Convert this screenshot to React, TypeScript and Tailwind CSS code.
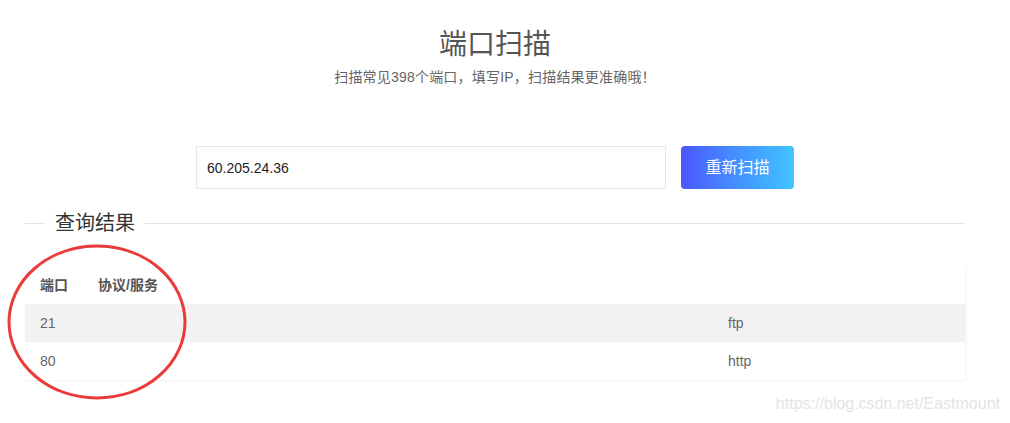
const font = { fontFamily: '"Liberation Sans", "Noto Sans CJK SC", sans-serif' };

const rows = [
    { port: '21', service: 'ftp', bg: 'bg-[#f2f2f2]' },
    { port: '80', service: 'http', bg: 'bg-white' },
];

export default function App() {
    return (
        <div className="relative w-[1010px] h-[423px] bg-white overflow-hidden" style={font}>
            <div className="ml-[25px] w-[940px] flex flex-col">
                {/* heading */}
                <div className="flex flex-col items-center pt-[27px]">
                    <h1 className="text-[28px] leading-[36px] text-[#555]">端口扫描</h1>
                    <p className="text-[14px] leading-[18px] text-[#666] mt-[5px] tracking-[0.2px]">扫描常见398个端口，填写IP，扫描结果更准确哦！</p>
                </div>

                {/* scan form */}
                <div className="flex justify-center gap-[15px] mt-[60px]">
                    <input
                        type="text"
                        defaultValue="60.205.24.36"
                        className="w-[470px] h-[43px] border border-[#e6e6e6] px-[10px] text-[14px] text-[#222] outline-none"
                    />
                    <button className="w-[113px] h-[43px] rounded-[4px] bg-gradient-to-r from-[#4a55ff] to-[#40c4ff] text-white text-[16px]">
                        重新扫描
                    </button>
                </div>

                {/* result fieldset */}
                <div className="flex items-center mt-[22px] h-[24px]">
                    <div className="w-[20px] h-px bg-[#e2e2e2]" />
                    <span className="px-[10px] text-[20px] leading-[24px] text-[#333]">查询结果</span>
                    <div className="flex-1 h-px bg-[#e2e2e2]" />
                </div>

                <div className="mt-[31px] shadow-[1px_1px_2px_rgba(0,0,0,0.06)] text-[14px]">
                    <div className="grid grid-cols-[73px_630px_1fr] h-[38px] items-center font-bold text-[14px] text-[#555]">
                        <span className="pl-[15px]">端口</span>
                        <span>协议/服务</span>
                        <span />
                    </div>
                    {rows.map(r => (
                        <div key={r.port} className={`grid grid-cols-[73px_630px_1fr] h-[38px] items-center text-[#666] ${r.bg}`}>
                            <span className="pl-[15px]">{r.port}</span>
                            <span />
                            <span>{r.service}</span>
                        </div>
                    ))}
                </div>
            </div>

            {/* red annotation circle */}
            <svg className="absolute left-0 top-0 pointer-events-none" width="1010" height="423">
                <ellipse cx="97" cy="322" rx="88" ry="76" fill="none" stroke="#ea3b3b" strokeWidth="3" />
            </svg>

            {/* watermark */}
            <span className="absolute right-[10px] top-[394px] text-[16px] leading-[20px] text-[#e4e4e4]">https://blog.csdn.net/Eastmount</span>
        </div>
    );
}
